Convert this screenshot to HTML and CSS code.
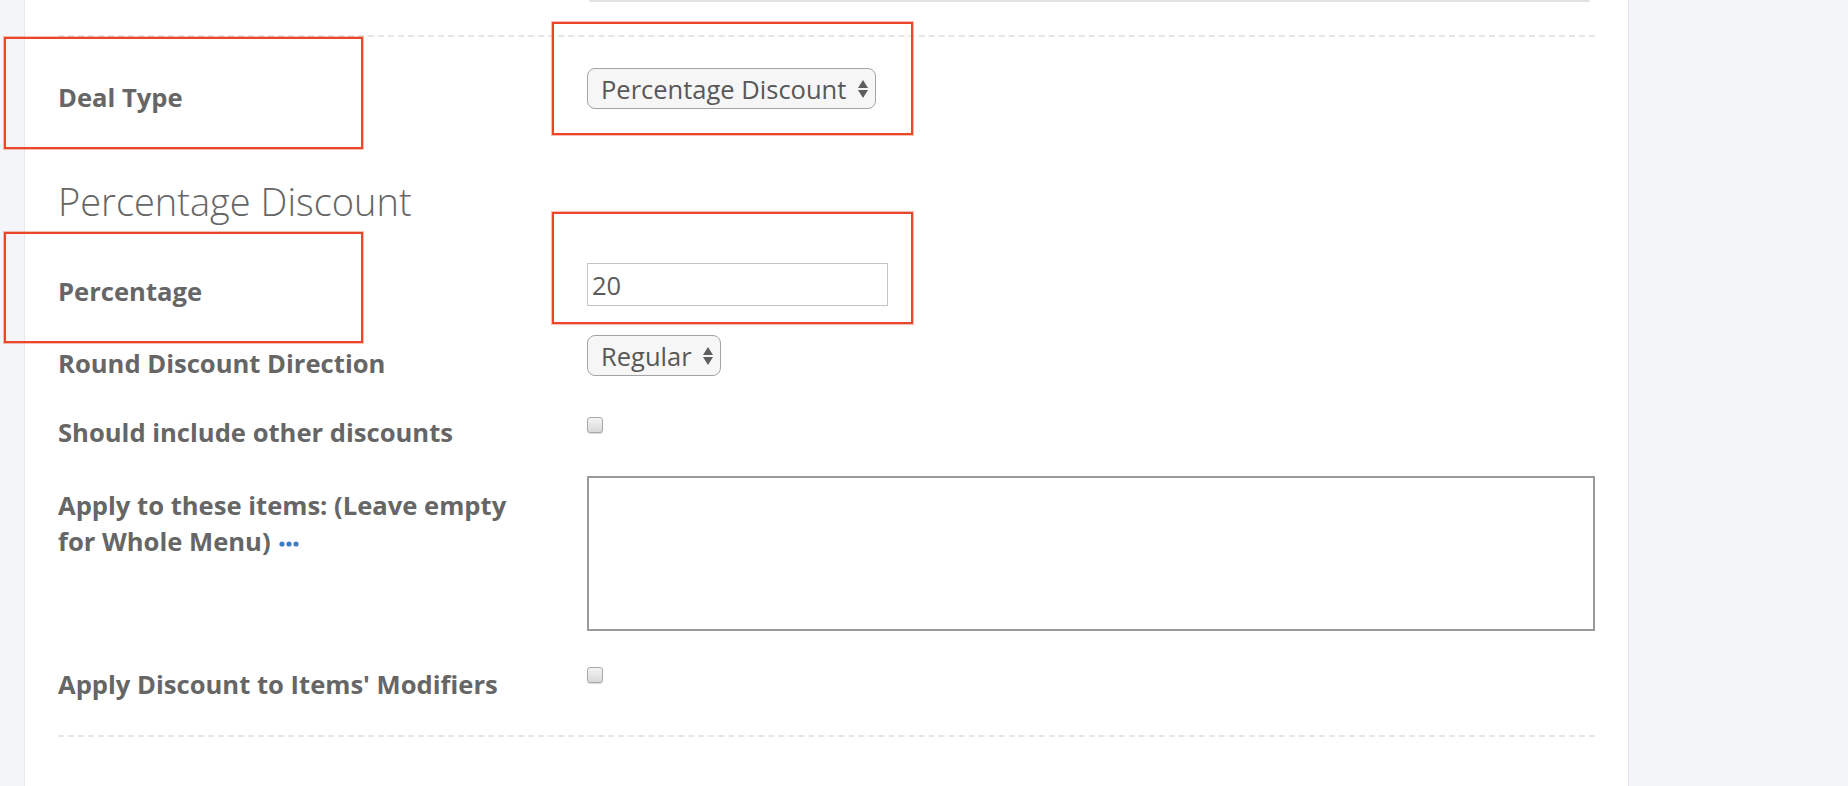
FILE: index.html
```html
<!DOCTYPE html>
<html lang="en">
<head>
  <meta charset="UTF-8" />
  <meta name="viewport" content="width=device-width, initial-scale=1.0"/>
  <title>Deal settings</title>
  <link rel="stylesheet" href="styles.css">
</head>
<body>

  <div class="page">
    <!-- левая серая полоса -->
    <aside class="side-left"></aside>

    <main class="main">
      <!-- низ предыдущего поля -->
      <div class="prev-field"></div>
      <div class="divider"></div>

      <div class="row row-deal">
        <label class="label">Deal Type</label>
        <div class="control">
          <span class="select-wrap">
            <select class="select">
              <option>Percentage Discount</option>
            </select>
            <svg class="arrows" viewBox="0 0 10 18"><path d="M0 8 L5 0 L10 8 Z M0 10 L10 10 L5 18 Z"/></svg>
          </span>
        </div>
      </div>

      <h2 class="section-title">Percentage Discount</h2>

      <div class="row row-percent">
        <label class="label">Percentage</label>
        <div class="control">
          <input class="text-input" type="text" value="20">
        </div>
      </div>

      <div class="row row-round">
        <label class="label">Round Discount Direction</label>
        <div class="control">
          <span class="select-wrap">
            <select class="select">
              <option>Regular</option>
            </select>
            <svg class="arrows" viewBox="0 0 10 18"><path d="M0 8 L5 0 L10 8 Z M0 10 L10 10 L5 18 Z"/></svg>
          </span>
        </div>
      </div>

      <div class="row row-other">
        <label class="label">Should include other discounts</label>
        <div class="control">
          <input class="checkbox" type="checkbox">
        </div>
      </div>

      <div class="row row-items">
        <label class="label label-wrap">Apply to these items: (Leave empty for Whole Menu)
          <svg class="more" viewBox="0 0 20 6"><circle cx="3" cy="3" r="2.6"/><circle cx="10" cy="3" r="2.6"/><circle cx="17" cy="3" r="2.6"/></svg>
        </label>
        <div class="control">
          <textarea class="textarea"></textarea>
        </div>
      </div>

      <div class="row row-mods">
        <label class="label">Apply Discount to Items' Modifiers</label>
        <div class="control">
          <input class="checkbox" type="checkbox">
        </div>
      </div>

      <div class="divider divider-bottom"></div>
    </main>

    <!-- правая серая панель -->
    <aside class="side-right"></aside>

    <!-- красные рамки-пометки поверх формы -->
    <div class="mark mark-deal-label"></div>
    <div class="mark mark-deal-field"></div>
    <div class="mark mark-percent-label"></div>
    <div class="mark mark-percent-field"></div>
  </div>

</body>
</html>
```

FILE: styles.css
```css
/* ======= Базовые стили ======= */
body {
  margin: 0;
  padding: 0;
  background-color: #ffffff;
  font-family: "Open Sans", "Liberation Sans", sans-serif;
  color: #666666;
  overflow: hidden;
}

.page {
  position: relative;
  display: flex;
  height: 786px;
}

/* ======= Боковые панели ======= */
.side-left {
  width: 24px;
  flex-shrink: 0;
  background-color: #f4f5f9;
  border-right: 1px solid #e6e8ee;
}

.side-right {
  width: 219px;
  flex-shrink: 0;
  background-color: #f4f5f9;
  border-left: 1px solid #e4e6ec;
}

/* ======= Основная колонка ======= */
.main {
  flex: 1;
  padding: 0 33px 0 33px;
}

.prev-field {
  height: 2px;
  margin-left: 531px;
  margin-right: 5px;
  background-color: #e2e2e2;
  border-radius: 0 0 2px 2px;
}

.divider {
  margin-top: 33px;
  border-top: 2px dashed #e6e6e6;
}
.divider-bottom {
  margin-top: 32px;
}

/* ======= Строки формы ======= */
.row {
  display: grid;
  grid-template-columns: 529px 1fr;
  align-items: start;
}

.label {
  display: block;
  font-size: 25.6px;
  font-weight: 700;
  line-height: 36px;
  color: #666666;
}
.label-wrap {
  max-width: 470px;
}

.control {
  display: flex;
  align-items: flex-start;
}

.row-deal    { margin-top: 31px; }
.row-deal .label { padding-top: 12px; }

.section-title {
  margin: 65px 0 0 0;
  font-size: 38px;
  font-weight: 300;
  line-height: 40px;
  color: #666666;
}

.row-percent { margin-top: 42px; }
.row-percent .label { padding-top: 11px; }

.row-round   { margin-top: 25px; }
.row-round .label { padding-top: 11px; }

.row-other   { margin-top: 33px; }
.row-other .checkbox { margin-top: 2px; }

.row-items   { margin-top: 25px; }
.row-items .label { padding-top: 12px; }

.row-mods    { margin-top: 36px; }

/* ======= Выпадающие списки ======= */
.select-wrap {
  position: relative;
  display: inline-block;
}

.select {
  appearance: none;
  -webkit-appearance: none;
  display: block;
  margin: 0;
  height: 41px;
  padding: 0 28px 0 13px;
  font-family: "Open Sans", "Liberation Sans", sans-serif;
  font-size: 25.5px;
  color: #585858;
  background-color: #f6f6f6;
  border: 1px solid #a4a4a4;
  border-radius: 8px;
}

.arrows {
  position: absolute;
  right: 8px;
  top: 50%;
  width: 10px;
  height: 18px;
  transform: translateY(-50%);
  fill: #5e5e5e;
  pointer-events: none;
}

/* ======= Поля ввода ======= */
.text-input {
  display: block;
  margin: 0;
  box-sizing: border-box;
  width: 301px;
  height: 43px;
  padding: 0 4px;
  font-family: "Open Sans", "Liberation Sans", sans-serif;
  font-size: 25.5px;
  color: #5a5a5a;
  border: 1px solid #c4c4c4;
  background-color: #ffffff;
}

.textarea {
  display: block;
  margin: 0;
  box-sizing: border-box;
  width: 100%;
  height: 155px;
  border: 2px solid #9a9a9a;
  resize: none;
}

.checkbox {
  appearance: none;
  -webkit-appearance: none;
  display: block;
  margin: 0;
  width: 16px;
  height: 16px;
  border: 1px solid #a9a9a9;
  border-radius: 3px;
  background: linear-gradient(#f4f4f4, #d9d9d9);
  box-shadow: 0 1px 1px rgba(0, 0, 0, 0.15);
}

/* синие точки «...» */
.more {
  width: 20px;
  height: 6px;
  margin-left: 2px;
  vertical-align: 4px;
  fill: #3f7cc6;
}

/* ======= Красные рамки ======= */
.mark {
  position: absolute;
  box-sizing: border-box;
  border: 2px solid #ec4629;
  box-shadow: 0 0 0 1px rgba(236, 70, 41, 0.35);
  pointer-events: none;
}
.mark-deal-label    { left: 4px;   top: 37px;  width: 359px; height: 112px; }
.mark-deal-field    { left: 552px; top: 22px;  width: 361px; height: 113px; }
.mark-percent-label { left: 4px;   top: 232px; width: 359px; height: 111px; }
.mark-percent-field { left: 552px; top: 212px; width: 361px; height: 112px; }
```
